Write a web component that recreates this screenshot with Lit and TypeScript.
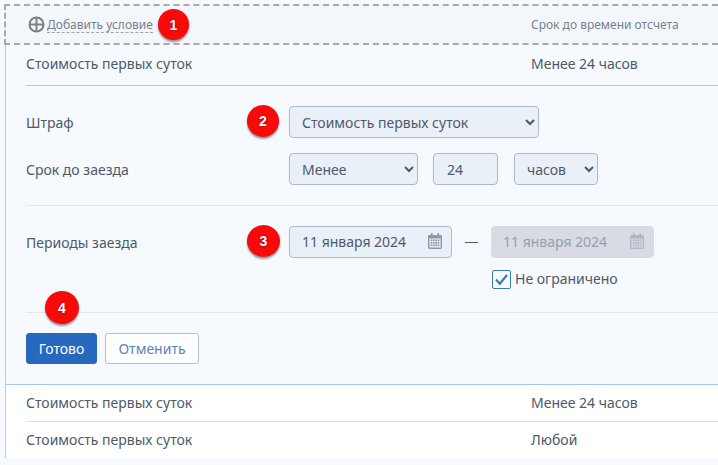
import { LitElement, html, css, svg } from "lit";
import { customElement } from "lit/decorators.js";

const calendar = (color: string) => html`<svg class="cal" width="14" height="16" viewBox="0 0 14 16" aria-hidden="true">
  <path fill=${color} fill-rule="evenodd" d="M3 0h1.6v2h4.8V0H11v2h1.6A1.4 1.4 0 0 1 14 3.4v11.2a1.4 1.4 0 0 1-1.4 1.4H1.4A1.4 1.4 0 0 1 0 14.6V3.4A1.4 1.4 0 0 1 1.4 2H3V0zM1.4 5.5v9.1h11.2V5.5H1.4z"/>
  ${[6.5, 9, 11.5].map((y) => [2.7, 5, 7.3, 9.6].map((x) => svg`<rect fill=${color} x=${x} y=${y} width="1.7" height="1.7"/>`))}
</svg>`;

@customElement("app-root")
export class AppRoot extends LitElement {
  static styles = css`
    :host {
      display: block;
      width: 718px;
      height: 465px;
      overflow: hidden;
      position: relative;
      background: #f6f9fd;
      font-family: "Noto Sans", "Open Sans", sans-serif;
      font-size: 14px;
      color: #4d5a6b;
      box-sizing: border-box;
      padding-top: 4px;
    }
    * { box-sizing: border-box; }
    .head {
      margin-left: 4px;
      height: 41px;
      border: 2px dashed #a9a9a9;
      border-right: none;
      background: #f3f6fb;
      display: grid;
      grid-template-columns: 503px 1fr;
      align-items: center;
      padding-left: 22px;
      font-size: 12px;
      color: #78818d;
    }
    .add { display: flex; align-items: center; gap: 2px; }
    .add span { border-bottom: 1px dashed #a0a6ae; line-height: 15px; }
    .table {
      margin-left: 5px;
      border-left: 1px solid #b3cde6;
    }
    .row {
      display: grid;
      grid-template-columns: 505px 1fr;
      margin-left: 20px;
      height: 36px;
      padding-bottom: 2px;
      align-items: center;
    }
    .row.open { height: 41px; border-bottom: 1px solid #b3c9e3; padding-bottom: 4px; }
    .white { background: #fff; }
    .white .row.first { border-bottom: 1px solid #dcdfe3; height: 37px; padding-bottom: 1px; }
    .panel {
      background: #f6f9fd;
      border-bottom: 1px solid #a5c8e8;
      height: 299px;
      padding-left: 20px;
    }
    .sec { display: grid; grid-template-columns: 263px 1fr; }
    .sec1 { padding-top: 20px; row-gap: 15px; height: 120px; border-bottom: 1px solid #e2e8f0; align-items: center; align-content: start; }
    .sec2 { padding-top: 20px; height: 107px; border-bottom: 1px solid #e2e8f0; align-content: start; }
    .sec2 .lbl { height: 32px; line-height: 34px; }
    .line { display: flex; align-items: center; }
    .ctrl {
      height: 32px;
      border: 1px solid #aeb8cb;
      border-radius: 4px;
      background: #eaf0f8;
      color: #4d5a6b;
      font: inherit;
      font-size: 14px;
      outline: none;
    }
    select.ctrl { padding-left: 8px; }
    .w1 { width: 250px; }
    .w2 { width: 129px; }
    .w3 { width: 65px; margin: 0 16px 0 15px; padding: 0 13px; display: flex; align-items: center; }
    .w4 { width: 84px; }
    .date {
      width: 163px;
      display: flex;
      align-items: center;
      justify-content: space-between;
      padding: 0 9px 2px 12px;
    }
    .date.off { background: #d8dbe3; border-color: #d8dbe3; color: #979eab; padding-left: 11px; }
    .dash { width: 39px; display: flex; justify-content: center; }
    .dash i { display: block; width: 13px; height: 1px; background: #4d5a6b; }
    .check {
      margin: 12px 0 0 203px;
      display: flex;
      align-items: center;
      gap: 4px;
      height: 19px;
    }
    .check span { padding-bottom: 2px; }
    .box {
      width: 19px;
      height: 19px;
      border: 1px solid #3b7cb8;
      border-radius: 2px;
      background: #f6f9fd;
      display: block;
    }
    .acts { display: flex; gap: 8px; padding-top: 20px; }
    .btn {
      height: 31px;
      border-radius: 3px;
      font: inherit;
      font-size: 14px;
      padding: 0;
      border: 1px solid #b4bfd0;
      background: #fff;
      color: #5a82b8;
      width: 94px;
    }
    .btn.pri { width: 71px; background: #2769bf; border-color: #2769bf; color: #fff; }
    .badge {
      position: absolute;
      border-radius: 50%;
      background: #f70a0a;
      color: #fff;
      font-family: "Liberation Sans", Arial, sans-serif;
      font-weight: 700;
      font-size: 14px;
      display: flex;
      align-items: center;
      justify-content: center;
      box-shadow: 0 2px 2px rgba(0, 0, 0, 0.4);
      text-shadow: 0 0 2px rgba(0,0,0,.5);
    }
    .b1 { left: 158px; top: 9px; width: 31px; height: 31px; }
    .b2 { left: 247px; top: 105px; width: 32px; height: 32px; }
    .b3 { left: 247px; top: 225px; width: 33px; height: 32px; }
    .b4 { left: 45px; top: 291px; width: 34px; height: 33px; }
  `;

  render() {
    return html`
      <div class="head">
        <div class="add">
          <svg width="17" height="17" viewBox="0 0 17 17" aria-hidden="true">
            <circle cx="8.5" cy="8.5" r="7" fill="none" stroke="#808080" stroke-width="2"/>
            <path d="M8.5 1.5v14M1.5 8.5h14" stroke="#808080" stroke-width="2"/>
          </svg>
          <span>Добавить условие</span>
        </div>
        <div>Срок до времени отсчета</div>
      </div>
      <div class="table">
        <div class="row open"><div>Стоимость первых суток</div><div>Менее 24 часов</div></div>
        <div class="panel">
          <div class="sec sec1">
            <div>Штраф</div>
            <div class="line"><select class="ctrl w1"><option>Стоимость первых суток</option></select></div>
            <div>Срок до заезда</div>
            <div class="line">
              <select class="ctrl w2"><option>Менее</option></select>
              <div class="ctrl w3">24</div>
              <select class="ctrl w4"><option>часов</option></select>
            </div>
          </div>
          <div class="sec sec2">
            <div class="lbl">Периоды заезда</div>
            <div>
              <div class="line">
                <div class="ctrl date">11 января 2024 ${calendar("#8d99ab")}</div>
                <div class="dash"><i></i></div>
                <div class="ctrl date off">11 января 2024 ${calendar("#b0b6c4")}</div>
              </div>
              <div class="check">
                <svg class="box" viewBox="0 0 17 17" aria-hidden="true">
                  <path d="M3 8.5l3.8 4.2L14 4" fill="none" stroke="#3b7cb8" stroke-width="2.2"/>
                </svg>
                <span>Не ограничено</span>
              </div>
            </div>
          </div>
          <div class="acts">
            <button class="btn pri">Готово</button>
            <button class="btn">Отменить</button>
          </div>
        </div>
        <div class="white">
          <div class="row first"><div>Стоимость первых суток</div><div>Менее 24 часов</div></div>
          <div class="row"><div>Стоимость первых суток</div><div>Любой</div></div>
        </div>
      </div>
      <div class="badge b1">1</div>
      <div class="badge b2">2</div>
      <div class="badge b3">3</div>
      <div class="badge b4">4</div>
    `;
  }
}
